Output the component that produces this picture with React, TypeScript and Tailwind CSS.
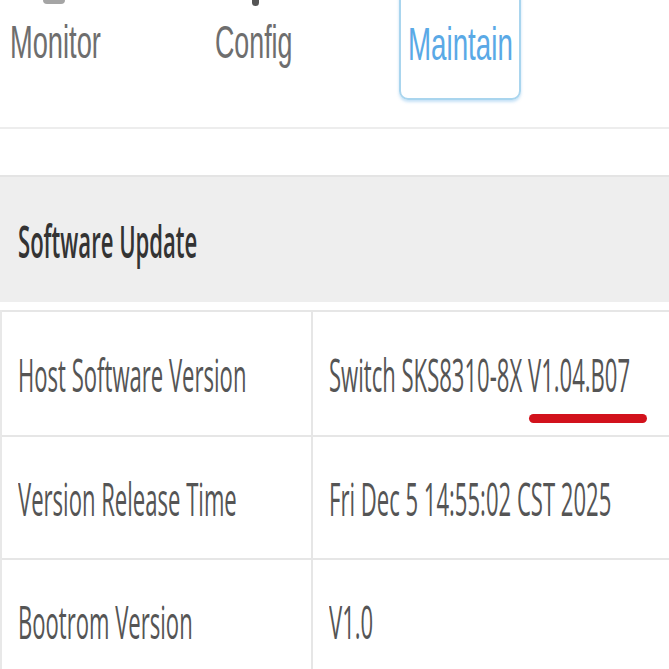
import React from 'react';

const rows = [
  { label: 'Host Software Version', value: 'Switch SKS8310-8X V1.04.B07', mark: true, h: 'h-[125px]' },
  { label: 'Version Release Time', value: 'Fri Dec 5 14:55:02 CST 2025', h: 'h-[123px]' },
  { label: 'Bootrom Version', value: 'V1.0', h: 'h-[123px]' },
];

const cellText = "inline-block origin-left scale-x-[0.48] whitespace-nowrap text-[46px] leading-none text-[#555] font-['Open_Sans',sans-serif]";

const App = () => {
  return (
    <div className="w-[669px] h-[669px] overflow-hidden bg-white">
      {/* top menu */}
      <div className="flex h-[129px] border-b-2 border-[#ededed] font-['Liberation_Sans',Arial,sans-serif]">
        <div className="w-[205px] pl-[10px] relative">
          <div className="absolute left-[43px] top-0 h-[4px] w-[22px] bg-[#a5a5a5] rounded-b-sm" />
          <div className="mt-[18px] text-[47px] leading-none text-[#6e6e6e] whitespace-nowrap inline-block origin-left scale-x-[0.58]">
            Monitor
          </div>
        </div>
        <div className="w-[194px] pl-[10px] relative">
          <div className="absolute left-[47px] top-0 h-[6px] w-[7px] bg-[#555] rounded-b-full" />
          <div className="mt-[18px] text-[47px] leading-none text-[#6e6e6e] whitespace-nowrap inline-block origin-left scale-x-[0.57]">
            Config
          </div>
        </div>
        <div className="w-[122px] h-[104px] -mt-[4px] border-2 border-[#a9d5ee] rounded-b-[9px] shadow-[0_2px_3px_rgba(90,170,230,0.35)] pl-[7px] overflow-hidden">
          <div className="mt-[22px] text-[47px] leading-none text-[#5aa9e6] whitespace-nowrap inline-block origin-left scale-x-[0.59]">
            Maintain
          </div>
        </div>
      </div>

      {/* section header */}
      <div className="mt-[46px] h-[127px] bg-[#eeeeee] border-t-2 border-[#e4e4e4] flex items-center pl-[18px] overflow-hidden">
        <span className="inline-block origin-left scale-x-[0.48] whitespace-nowrap text-[46px] leading-none font-semibold text-[#333] font-['Open_Sans',sans-serif]">
          Software Update
        </span>
      </div>

      {/* info table */}
      <div className="mt-[8px] border-l-2 border-[#e8e8e8]">
        {rows.map((r) => (
          <div key={r.label} className={`flex ${r.h} border-t-2 border-[#e6e6e6]`}>
            <div className="w-[311px] border-r-2 border-[#e6e6e6] flex items-center pl-[16px] overflow-hidden">
              <span className={cellText}>{r.label}</span>
            </div>
            <div className="flex-1 flex items-center pl-[16px] overflow-hidden relative">
              <span className={cellText}>{r.value}</span>
              {r.mark && (
                <div className="absolute left-[216px] top-[102px] h-[9px] w-[118px] rounded-full bg-[#d2121c]" />
              )}
            </div>
          </div>
        ))}
      </div>
    </div>
  );
};

export default App;
